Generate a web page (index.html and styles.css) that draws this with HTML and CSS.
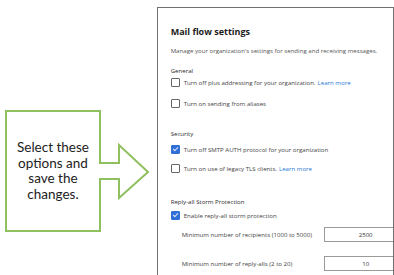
FILE: index.html
```html
<!DOCTYPE html>
<html lang="en">
<head>
	<meta charset="UTF-8">
	<title>Mail flow settings</title>
	<link rel="stylesheet" href="styles.css">
</head>
<body>
	<div class="page">
		<div class="callout">
			<svg class="callout-shape" width="146" height="124" viewBox="0 0 146 124">
				<polygon points="1,1 95,1 95,53 114,53 114,35 143,62 114,88 114,69 95,69 95,121 1,121" fill="#fff" stroke="#8fbf5f" stroke-width="2"/>
			</svg>
			<div class="callout-text">Select these<br>options and<br>save the<br>changes.</div>
		</div>
		<div class="panel">
			<div class="title">Mail flow settings</div>
			<div class="desc">Manage your organization's settings for sending and receiving messages.</div>

			<div class="section general">General</div>
			<div class="check cb1"><span class="box"></span>Turn off plus addressing for your organization. <a href="#">Learn more</a></div>
			<div class="check cb2"><span class="box"></span>Turn on sending from aliases</div>

			<div class="section security">Security</div>
			<div class="check cb3"><span class="box on"></span>Turn off SMTP AUTH protocol for your organization</div>
			<div class="check cb4"><span class="box"></span>Turn on use of legacy TLS clients. <a href="#">Learn more</a></div>

			<div class="section storm">Reply-all Storm Protection</div>
			<div class="check cb5"><span class="box on"></span>Enable reply-all storm protection</div>
			<div class="field f1">
				<span class="label">Minimum number of recipients (1000 to 5000)</span>
				<span class="input">2500</span>
			</div>
			<div class="field f2">
				<span class="label">Minimum number of reply-alls (2 to 20)</span>
				<span class="input">10</span>
			</div>
		</div>
	</div>
</body>
</html>
```

FILE: styles.css
```css
body {
	margin: 0;
	background: #fff;
}
.page {
	display: flex;
	align-items: flex-start;
	padding: 7px 0 0 5px;
	gap: 8px;
}
.callout {
	position: relative;
	width: 146px;
	height: 124px;
	margin-top: 103px;
}
.callout-shape {
	position: absolute;
	left: 0;
	top: 0;
}
.callout-text {
	position: relative;
	width: 96px;
	height: 122px;
	display: flex;
	align-items: center;
	justify-content: center;
	text-align: center;
	font-family: Lato, "Open Sans", sans-serif;
	font-size: 13.5px;
	line-height: 15.5px;
	color: #222;
}
.panel {
	width: 226px;
	height: 260px;
	border: 1px solid #707070;
	box-shadow: 1px 1px 0 #b0b0b0;
	overflow: hidden;
	display: flex;
	flex-direction: column;
	padding: 18px 0 0 13px;
	box-sizing: content-box;
	font-family: "Open Sans", sans-serif;
	color: #333;
	font-size: 6.1px;
}
.title {
	height: 12px;
	line-height: 12px;
	font-size: 9px;
	font-weight: 700;
	color: #1b1b1b;
}
.desc {
	margin-top: 8px;
	height: 10px;
	line-height: 10px;
	color: #555;
}
.section {
	height: 10px;
	line-height: 10px;
	color: #2b2b2b;
}
.general { margin-top: 10px; }
.security { margin-top: 21px; }
.storm { margin-top: 24px; }
.check {
	display: flex;
	align-items: center;
	height: 10px;
	white-space: nowrap;
	color: #444;
}
.cb1 { margin-top: 1px; }
.cb2 { margin-top: 11px; }
.cb3 { margin-top: 5px; }
.cb4 { margin-top: 9px; }
.cb5 { margin-top: 3px; }
.check a {
	color: #2a78d4;
	text-decoration: none;
	margin-left: 2px;
}
.box {
	width: 7px;
	height: 7px;
	border: 1px solid #666;
	border-radius: 1px;
	margin-right: 4px;
	flex: none;
	position: relative;
}
.box.on {
	background: #2f6fd6;
	border-color: #2f6fd6;
}
.box.on::after {
	content: "";
	position: absolute;
	left: 2px;
	top: 0px;
	width: 2px;
	height: 4px;
	border: solid #dfe9f8;
	border-width: 0 1px 1px 0;
	transform: rotate(45deg);
}
.field {
	display: flex;
	align-items: center;
	padding-left: 11px;
	height: 15px;
	white-space: nowrap;
	color: #444;
}
.f1 { margin-top: 7px; }
.f2 { margin-top: 14px; }
.label {
	flex: 0 0 142px;
}
.input {
	flex: none;
	width: 82px;
	height: 13px;
	line-height: 13px;
	border: 1px solid #9a9a9a;
	text-align: center;
	color: #333;
}
```
